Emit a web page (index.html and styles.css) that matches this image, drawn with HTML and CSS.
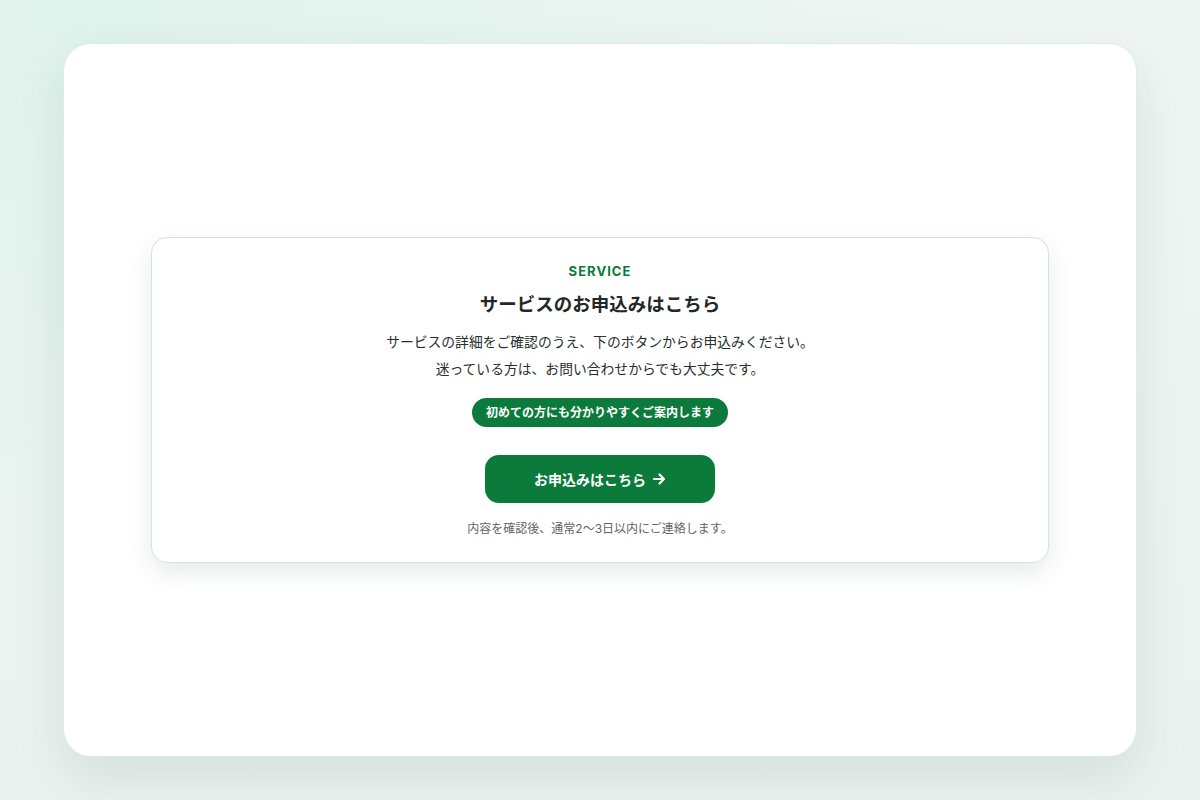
FILE: index.html
```html
<!DOCTYPE html>
<html lang="ja">
<head>
  <meta charset="UTF-8" />
  <meta name="viewport" content="width=device-width, initial-scale=1.0"/>
  <title>サービスのお申込み</title>
  <link rel="stylesheet" href="styles.css">
</head>
<body>

  <div class="frame">
    <section class="cta">
      <p class="eyebrow">SERVICE</p>
      <h2 class="cta-title">サービスのお申込みはこちら</h2>
      <p class="lead">サービスの詳細をご確認のうえ、下のボタンからお申込みください。<br>迷っている方は、お問い合わせからでも大丈夫です。</p>
      <span class="badge">初めての方にも分かりやすくご案内します</span>
      <a class="btn" href="#">お申込みはこちら
        <svg class="arrow" width="14" height="14" viewBox="0 0 14 14" fill="none" stroke="currentColor" stroke-width="2.2" stroke-linecap="round" stroke-linejoin="round"><path d="M2 7h10M7.5 2.5 12 7l-4.5 4.5"/></svg>
      </a>
      <p class="note">内容を確認後、通常2〜3日以内にご連絡します。</p>
    </section>
  </div>

</body>
</html>
```

FILE: styles.css
```css
* { margin: 0; padding: 0; box-sizing: border-box; }
html, body { height: 100%; }
body {
  font-family: Inter, "Noto Sans CJK JP", sans-serif;
  background:
    radial-gradient(ellipse at 8% 0%, #dff2eb 0%, rgba(223,242,235,0) 55%),
    linear-gradient(180deg, #eef5f3 0%, #eaf2ef 100%);
  color: #1f2925;
  padding: 43px 63px;
}
.frame {
  height: 714px;
  background: #fff;
  border: 1px solid #dcece6;
  border-radius: 28px;
  box-shadow: 0 22px 50px rgba(30, 70, 60, 0.10);
  display: flex;
  align-items: center;
  justify-content: center;
  padding: 0 87px;
}
.cta {
  width: 100%;
  background: #fff;
  border: 1px solid #cfe6dc;
  border-radius: 16px;
  box-shadow: 0 10px 24px rgba(30, 60, 50, 0.10);
  padding: 24px 24px 24px;
  display: flex;
  flex-direction: column;
  align-items: center;
  text-align: center;
}
.eyebrow {
  font-size: 13px;
  font-weight: 700;
  letter-spacing: 0.08em;
  color: #0b7a3b;
  line-height: 18px;
}
.cta-title {
  font-size: 18.5px;
  font-weight: 700;
  line-height: 28px;
  margin-top: 10px;
  color: #1f2925;
}
.lead {
  font-size: 13.8px;
  line-height: 27px;
  margin-top: 11px;
  color: #26302c;
}
.badge {
  margin-top: 15px;
  background: #0b7a3b;
  color: #fff;
  font-size: 12px;
  font-weight: 700;
  line-height: 29px;
  padding: 0 14px;
  border-radius: 15px;
}
.btn {
  margin-top: 28px;
  width: 230px;
  height: 48px;
  border-radius: 14px;
  background: #0b7a3b;
  color: #fff;
  font-size: 14px;
  font-weight: 700;
  text-decoration: none;
  display: flex;
  align-items: center;
  justify-content: center;
  gap: 6px;
}
.note {
  margin-top: 17px;
  font-size: 12px;
  line-height: 18px;
  color: #5e6763;
}
```
